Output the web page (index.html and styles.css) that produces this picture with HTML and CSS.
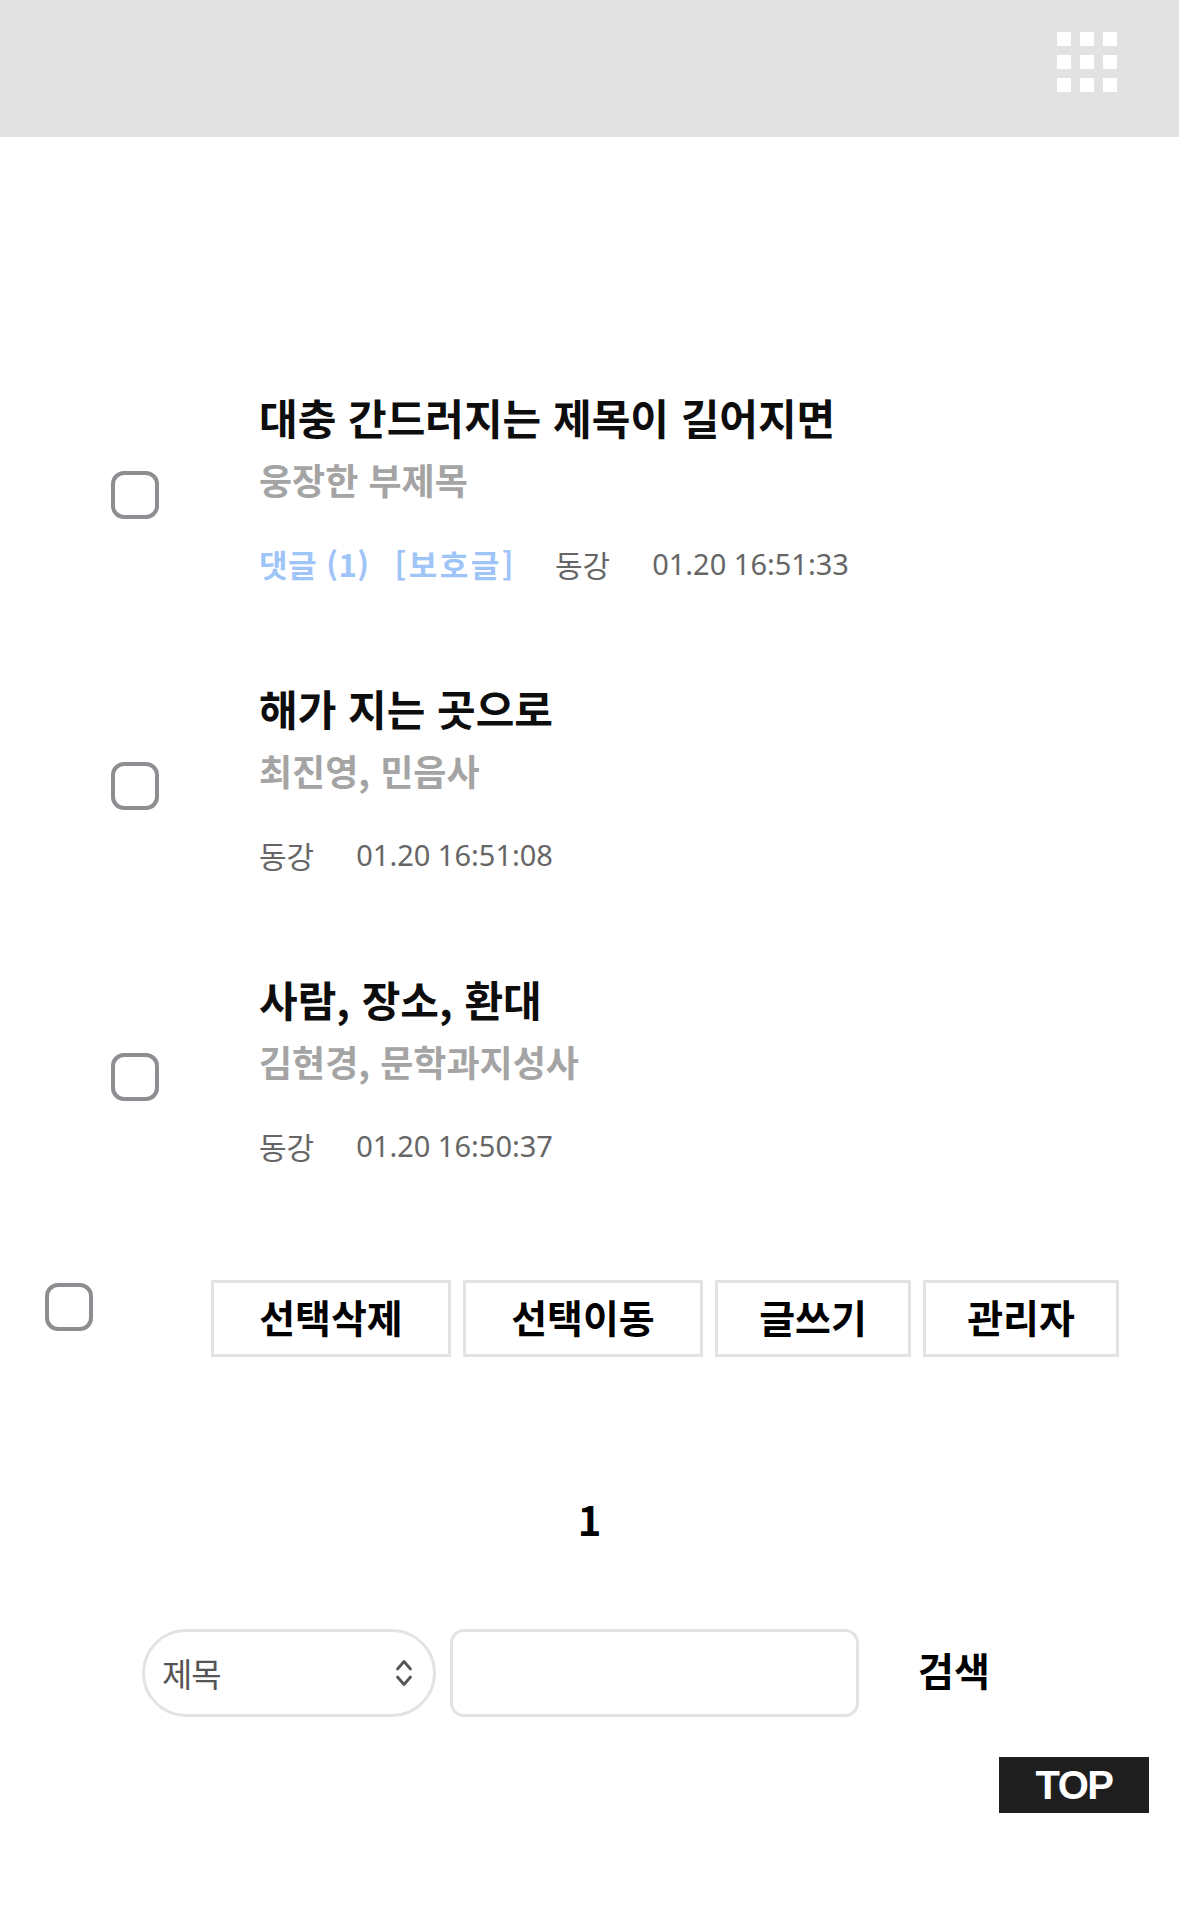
FILE: index.html
```html
<!DOCTYPE html>
<html lang="ko">
<head>
<meta charset="utf-8">
<title>게시판</title>
<link rel="stylesheet" href="styles.css">
</head>
<body>
<header class="topbar">
  <div class="grid-icon" aria-label="menu">
    <span></span><span></span><span></span>
    <span></span><span></span><span></span>
    <span></span><span></span><span></span>
  </div>
</header>

<main class="board">
  <ul class="post-list">
    <li class="post">
      <span class="check"></span>
      <div class="post-body">
        <div class="post-title">대충 간드러지는 제목이 길어지면</div>
        <div class="post-sub">웅장한 부제목</div>
        <div class="post-meta">
          <span class="meta-blue m-reply">댓글 (1)</span>
          <span class="meta-blue m-lock">[보호글]</span>
          <span class="m-author">동강</span>
          <span class="m-date">01.20 16:51:33</span>
        </div>
      </div>
    </li>
    <li class="post">
      <span class="check"></span>
      <div class="post-body">
        <div class="post-title">해가 지는 곳으로</div>
        <div class="post-sub">최진영, 민음사</div>
        <div class="post-meta">
          <span class="m-author">동강</span>
          <span class="m-date">01.20 16:51:08</span>
        </div>
      </div>
    </li>
    <li class="post">
      <span class="check"></span>
      <div class="post-body">
        <div class="post-title">사람, 장소, 환대</div>
        <div class="post-sub">김현경, 문학과지성사</div>
        <div class="post-meta">
          <span class="m-author">동강</span>
          <span class="m-date">01.20 16:50:37</span>
        </div>
      </div>
    </li>
  </ul>

  <div class="actions">
    <span class="check check-all"></span>
    <div class="btns">
      <button class="btn btn-wide">선택삭제</button>
      <button class="btn btn-wide">선택이동</button>
      <button class="btn btn-narrow">글쓰기</button>
      <button class="btn btn-narrow">관리자</button>
    </div>
  </div>

  <div class="paging"><strong>1</strong></div>

  <form class="search">
    <div class="select">
      <span class="select-label">제목</span>
      <svg class="select-arrow" width="18" height="32" viewBox="0 0 18 32">
        <polyline points="2.5,12 9,4.5 15.5,12" fill="none" stroke="#555" stroke-width="2.8" stroke-linecap="round" stroke-linejoin="round"/>
        <polyline points="2.5,20 9,27.5 15.5,20" fill="none" stroke="#555" stroke-width="2.8" stroke-linecap="round" stroke-linejoin="round"/>
      </svg>
    </div>
    <div class="input"></div>
    <span class="search-btn">검색</span>
  </form>
</main>

<a class="top-btn">TOP</a>
</body>
</html>
```

FILE: styles.css
```css
* { box-sizing: border-box; }
html, body { margin: 0; padding: 0; background: #fff; }
body {
  font-family: "Noto Sans CJK KR", "Noto Sans", sans-serif;
  color: #111;
  width: 1179px;
  min-height: 1916px;
}

.topbar {
  height: 137px;
  background: #e2e2e2;
  display: flex;
  justify-content: flex-end;
  align-items: flex-start;
  padding: 32px 62px 0 0;
}
.grid-icon {
  display: grid;
  grid-template-columns: repeat(3, 14px);
  grid-auto-rows: 14px;
  gap: 9px;
}
.grid-icon span { background: #fff; }

.board { padding-top: 250px; }

.post-list { list-style: none; margin: 0; padding: 0; }
.post {
  display: flex;
  align-items: center;
  padding-left: 111px;
  height: 197px;
  margin-bottom: 94px;
}
.post:last-child { margin-bottom: 0; }

.check {
  display: block;
  flex: none;
  width: 48px;
  height: 48px;
  border: 4.5px solid #8e8e92;
  border-radius: 13px;
  background: #fff;
}
.post .check { margin-top: 19px; }

.post-body { margin-left: 100px; }
.post-title {
  font-size: 42px;
  font-weight: 700;
  line-height: 60px;
  color: #0d0d0d;
}
.post-sub {
  font-size: 36px;
  font-weight: 700;
  line-height: 64px;
  color: #a4a4a4;
}
.post-meta {
  display: flex;
  margin-top: 33px;
  font-size: 30px;
  line-height: 40px;
  color: #666;
}
.meta-blue { color: #9ec4f8; font-weight: 700; font-size: 31px; }
.m-reply { margin-right: 25px; letter-spacing: 0.5px; }
.m-lock { margin-right: 39px; letter-spacing: 2.5px; }
.m-author { margin-right: 42px; }
.m-date {
  font-family: "Noto Sans", "Noto Sans CJK KR", sans-serif;
  font-size: 29px;
}

.actions {
  display: flex;
  align-items: flex-start;
  margin-top: 114px;
  padding-left: 45px;
}
.check-all { margin-top: 3px; }
.btns {
  display: flex;
  gap: 12px;
  margin-left: 118px;
}
.btn {
  height: 77px;
  border: 3px solid #e3e3e3;
  background: #fff;
  font-family: "Noto Sans CJK KR", sans-serif;
  font-size: 39px;
  font-weight: 700;
  color: #000;
  padding: 0 0 6px;
}
.btn-wide { width: 240px; }
.btn-narrow { width: 196px; }

.paging {
  margin-top: 132px;
  text-align: center;
  font-size: 40px;
  line-height: 60px;
}
.paging strong { font-weight: 700; color: #000; }

.search {
  display: flex;
  align-items: center;
  margin: 80px 0 0 142px;
}
.select {
  width: 294px;
  height: 88px;
  border: 3px solid #e3e3e3;
  border-radius: 44px;
  display: flex;
  align-items: center;
  justify-content: space-between;
  padding: 0 20px 0 17px;
}
.select-label {
  font-size: 33px;
  color: #555;
  letter-spacing: -1px;
}
.input {
  width: 409px;
  height: 88px;
  margin-left: 14px;
  border: 3px solid #e3e3e3;
  border-radius: 14px;
}
.search-btn {
  margin-left: 59px;
  margin-bottom: 8px;
  font-size: 39px;
  font-weight: 700;
  color: #000;
}

.top-btn {
  position: fixed;
  right: 30px;
  bottom: 103px;
  width: 150px;
  height: 56px;
  background: #1e1e1e;
  color: #fff;
  font-family: "Liberation Sans", Arial, sans-serif;
  font-weight: 700;
  font-size: 40px;
  letter-spacing: -1.5px;
  display: flex;
  align-items: center;
  justify-content: center;
}
```
